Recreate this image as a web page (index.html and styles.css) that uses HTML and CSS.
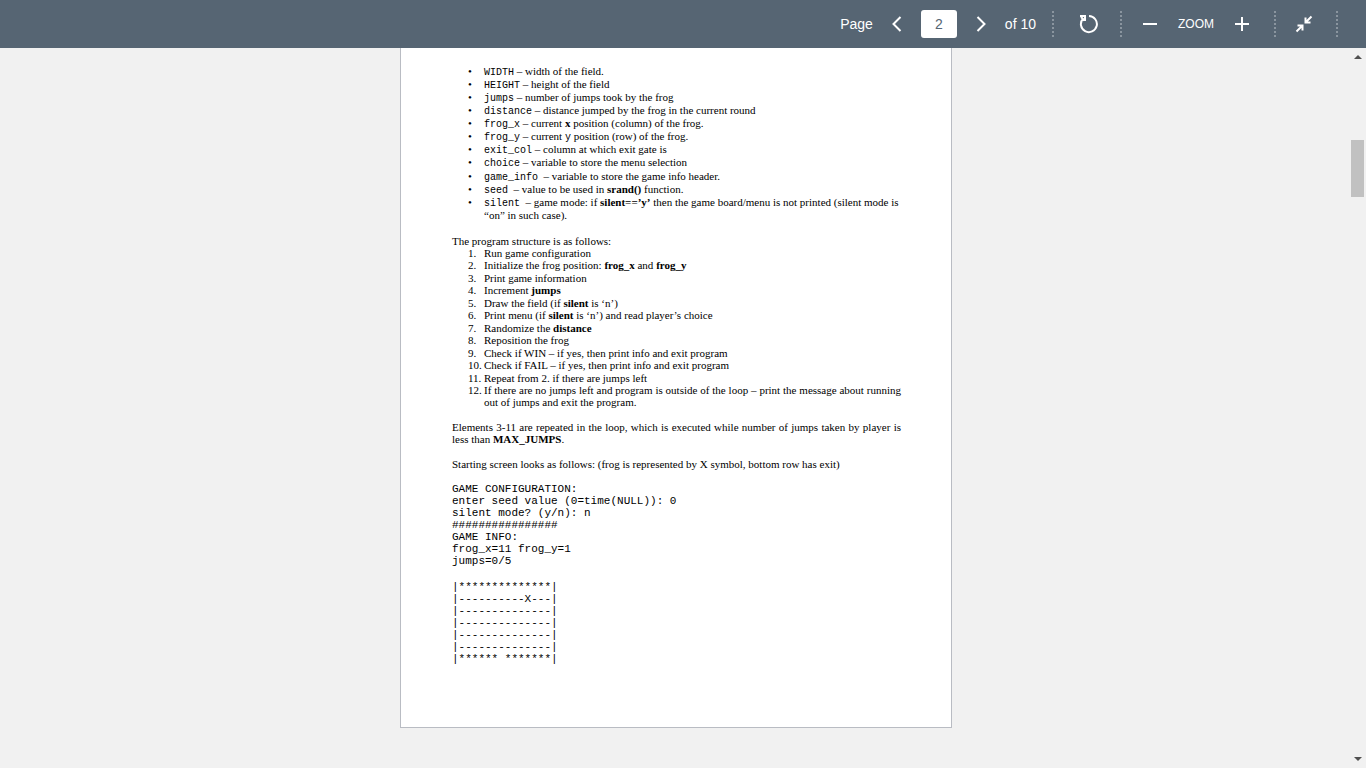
FILE: index.html
```html
<!DOCTYPE html>
<html lang="en">
<head>
    <meta charset="UTF-8">
    <meta name="viewport" content="width=device-width, initial-scale=1.0">
    <title>Document viewer</title>
    <link rel="stylesheet" href="styles.css">
</head>
<body>
    <header class="toolbar">
        <div class="group pager">
            <label for="page">Page</label>
            <button class="prev" aria-label="Previous page">
                <svg width="10" height="16" viewBox="0 0 10 16"><path d="M8.500 1L1.500 8l7 7"/></svg>
            </button>
            <input type="text" id="page" value="2">
            <button class="next" aria-label="Next page">
                <svg width="10" height="16" viewBox="0 0 10 16"><path d="M1.500 1l7 7-7 7"/></svg>
            </button>
            <span>of 10</span>
        </div>
        <div class="group rotate">
            <button aria-label="Rotate">
                <svg width="20" height="20" viewBox="0 0 20 20"><path d="M11 2.100A8 8 0 1 1 5 4.700M2 2h5v5M3 3l3.500 3.500"/></svg>
            </button>
        </div>
        <div class="group zoom">
            <button aria-label="Zoom out">
                <svg width="14" height="14" viewBox="0 0 14 14"><path d="M0 7h14"/></svg>
            </button>
            <span>ZOOM</span>
            <button aria-label="Zoom in">
                <svg width="14" height="14" viewBox="0 0 14 14"><path d="M0 7h14M7 0v14"/></svg>
            </button>
        </div>
        <div class="group shrink">
            <button aria-label="Exit full screen">
                <svg width="18" height="18" viewBox="0 0 18 18"><path d="M16.500 1.500L11 7M10.500 2.500v5h5M1.500 16.500L7 11M2.500 10.500h5v5"/></svg>
            </button>
        </div>
    </header>

    <div class="viewer">
        <main class="pages">
            <article class="sheet">
                <ul>
                    <li><code>WIDTH</code> – width of the field.</li>
                    <li><code>HEIGHT</code> – height of the field</li>
                    <li><code>jumps</code> – number of jumps took by the frog</li>
                    <li><code>distance</code> – distance jumped by the frog in the current round</li>
                    <li><code>frog_x</code> – current <b>x</b> position (column) of the frog.</li>
                    <li><code>frog_y</code> – current <code>y</code> position (row) of the frog.</li>
                    <li><code>exit_col</code> – column at which exit gate is</li>
                    <li><code>choice</code> – variable to store the menu selection</li>
                    <li><code>game_info</code>&nbsp; – variable to store the game info header.</li>
                    <li><code>seed</code>&nbsp; – value to be used in <b>srand()</b> function.</li>
                    <li><code>silent</code>&nbsp; – game mode: if <b>silent==’y’</b> then the game board/menu is not printed (silent mode is “on” in such case).</li>
                </ul>

                <p class="lead">The program structure is as follows:</p>
                <ol>
                    <li>Run game configuration</li>
                    <li>Initialize the frog position: <b>frog_x</b> and <b>frog_y</b></li>
                    <li>Print game information</li>
                    <li>Increment <b>jumps</b></li>
                    <li>Draw the field (if <b>silent</b> is ‘n’)</li>
                    <li>Print menu (if <b>silent</b> is ‘n’) and read player’s choice</li>
                    <li>Randomize the <b>distance</b></li>
                    <li>Reposition the frog</li>
                    <li>Check if WIN – if yes, then print info and exit program</li>
                    <li>Check if FAIL – if yes, then print info and exit program</li>
                    <li>Repeat from 2. if there are jumps left</li>
                    <li>If there are no jumps left and program is outside of the loop – print the message about running out of jumps and exit the program.</li>
                </ol>

                <p>Elements 3-11 are repeated in the loop, which is executed while number of jumps taken by player is less than <b>MAX_JUMPS</b>.</p>

                <p>Starting screen looks as follows: (frog is represented by X symbol, bottom row has exit)</p>

<pre>GAME CONFIGURATION:
enter seed value (0=time(NULL)): 0
silent mode? (y/n): n
################
GAME INFO:
frog_x=11 frog_y=1
jumps=0/5</pre>
<pre>|**************|
|----------X---|
|--------------|
|--------------|
|--------------|
|--------------|
|****** *******|</pre>
            </article>
        </main>
        <div class="scrollbar">
            <svg width="8" height="4" viewBox="0 0 8 4"><path d="M0 4l4-4 4 4z"/></svg>
            <div class="track"><div class="thumb"></div></div>
            <svg width="8" height="4" viewBox="0 0 8 4"><path d="M0 0l4 4 4-4z"/></svg>
        </div>
    </div>
</body>
</html>
```
FILE: styles.css
```css
* {
    box-sizing: border-box;
}
body {
    margin: 0;
    height: 100vh;
    display: flex;
    flex-direction: column;
    background: #f1f1f1;
    overflow: hidden;
}

/* toolbar */
.toolbar {
    display: flex;
    justify-content: flex-end;
    align-items: center;
    height: 48px;
    flex-shrink: 0;
    padding-right: 28px;
    background: #566573;
    color: #fff;
    font: 14px/18px "Liberation Sans", Arial, sans-serif;
}
.group {
    display: flex;
    align-items: center;
    justify-content: center;
    height: 26px;
    border-right: 2px dotted #8a959f;
}
.pager {
    padding-right: 16px;
}
.rotate {
    width: 68px;
    padding-left: 2px;
}
.zoom {
    width: 154px;
    gap: 21px;
    padding-right: 4px;
    font-size: 12px;
}
.shrink {
    width: 62px;
    padding-right: 4px;
}
.toolbar button {
    display: flex;
    padding: 0;
    border: 0;
    background: none;
    cursor: pointer;
}
.toolbar svg {
    fill: none;
    stroke: #fff;
    stroke-width: 2;
}
.prev,
.next {
    margin: 0 19px;
}
#page {
    width: 36px;
    height: 28px;
    padding: 0;
    border: 0;
    border-radius: 3px;
    background: #fff;
    color: #566573;
    font: inherit;
    text-align: center;
}

/* document */
.viewer {
    display: flex;
    flex: 1;
    min-height: 0;
}
.pages {
    flex: 1;
    padding-left: 3px;
    overflow: hidden;
}
.sheet {
    max-width: 552px;
    margin: 0 auto;
    padding: 17px 50px 48px 51px;
    border: 1px solid #b9bcc3;
    border-top: 0;
    background: #fff;
    color: #000;
    font: 11px/12px "Liberation Serif", "Times New Roman", serif;
}
.sheet ul,
.sheet ol {
    margin: 0 0 13px;
    padding-left: 32px;
    list-style: none;
    counter-reset: step;
}
.sheet ul {
    line-height: 13px;
}
.sheet li::before {
    content: "•";
    display: inline-block;
    width: 16px;
    margin-left: -16px;
}
.sheet ol li {
    counter-increment: step;
    text-align: justify;
}
.sheet ol li::before {
    content: counter(step) ".";
}
.sheet ul li:nth-child(8),
.sheet ol li:nth-child(2n) {
    margin-bottom: 1px;
}
.sheet p {
    margin: 0 0 13px;
    text-align: justify;
}
.sheet .lead {
    margin: 0;
}
.sheet code,
.sheet pre {
    font-family: "Liberation Mono", "Courier New", monospace;
    font-size: 11px;
}
.sheet code {
    font-size: 10px;
    line-height: 1;
}
.sheet pre {
    margin: 0 0 14px;
}

/* scrollbar */
.scrollbar {
    display: flex;
    flex-direction: column;
    align-items: center;
    width: 17px;
    padding: 7px 0;
}
.scrollbar svg {
    fill: #505050;
}
.track {
    flex: 1;
    padding-top: 81px;
}
.thumb {
    width: 13px;
    height: 57px;
    background: #c1c1c1;
}
```
